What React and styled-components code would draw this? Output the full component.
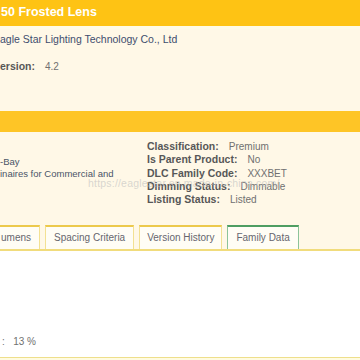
import React from "react";
import styled, { createGlobalStyle } from "styled-components";

const Global = createGlobalStyle`
  html, body {
    margin: 0;
    padding: 0;
    background: #ffffff;
    font-family: "Liberation Sans", Arial, sans-serif;
  }
`;

const Page = styled.div`
  width: 360px;
  height: 360px;
  overflow: hidden;
  position: relative;
  display: flex;
  flex-direction: column;
`;

const Header = styled.div`
  height: 26px;
  flex: none;
  background: #fec314;
  color: #ffffff;
  font-weight: bold;
  font-size: 12.5px;
  line-height: 25px;
  padding-left: 1px;
  white-space: nowrap;
  border-bottom: 3px solid #fffbe6;
`;

const Cream = styled.div`
  flex: none;
  background: #fff8e7;
  position: relative;
`;

const Company = styled.div`
  padding-top: 1px;
  height: 18px;
  line-height: 18px;
  font-size: 10.5px;
  color: #3e4d6e;
  white-space: nowrap;
`;

const Version = styled.div`
  margin-top: 9px;
  height: 18px;
  line-height: 18px;
  white-space: nowrap;
  display: flex;
  gap: 10px;
  align-items: baseline;
`;

const Label = styled.span`
  font-weight: bold;
  color: #575757;
  font-size: 10.5px;
`;

const Value = styled.span`
  color: #707070;
  font-size: 10px;
`;

const Bar = styled.div`
  margin-top: 36px;
  height: 21px;
  background: #fec526;
`;

const Details = styled.div`
  display: grid;
  grid-template-columns: 147px 1fr;
  padding-top: 8px;
  height: 85px;
`;

const LeftCol = styled.div`
  padding-top: 16px;
  font-size: 9.5px;
  line-height: 12px;
  color: #4a5468;
  white-space: nowrap;
`;

const RightCol = styled.div`
  display: flex;
  flex-direction: column;
`;

const Row = styled.div`
  height: 13.3px;
  line-height: 13.3px;
  white-space: nowrap;
  display: flex;
  gap: 10px;
  align-items: baseline;
`;

const Watermark = styled.div`
  position: absolute;
  left: 88px;
  top: 148px;
  font-size: 10.5px;
  color: rgba(190, 190, 190, 0.6);
  white-space: nowrap;
  letter-spacing: 0.2px;
  pointer-events: none;
`;

const Tabs = styled.div`
  display: flex;
  gap: 5px;
  height: 24px;
  border-bottom: 2px solid #f1dc7c;
  align-items: flex-end;
`;

const Tab = styled.div`
  height: 22px;
  padding: 0 ${(p) => p.$pad || 7}px 0 ${(p) => p.$padL ?? p.$pad ?? 7}px;
  margin-left: ${(p) => p.$ml || 0}px;
  background: #fffdf5;
  border: 1px solid ${(p) => (p.$active ? "#8cc49a" : "#f3e192")};
  border-top: 2px solid ${(p) => (p.$active ? "#4f9e62" : "#ecc94c")};
  border-bottom: none;
  color: #66666e;
  font-size: 10px;
  line-height: 22px;
  white-space: nowrap;
`;

const White = styled.div`
  flex: 1;
  background: #ffffff;
  display: flex;
  flex-direction: column;
  justify-content: flex-end;
`;

const Percent = styled.div`
  font-size: 10px;
  color: #707070;
  height: 14px;
  line-height: 14px;
  padding-left: 2px;
  margin-bottom: 8px;
  white-space: nowrap;
`;

const Footer = styled.div`
  height: 2px;
  background: #fffbe0;
  border-top: 1px solid #eedf8c;
`;

export default function App() {
  return (
    <Page>
      <Global />
      <Header>50 Frosted Lens</Header>
      <Cream>
        <Company>agle Star Lighting Technology Co., Ltd</Company>
        <Version>
          <Label>ersion:</Label>
          <Value>4.2</Value>
        </Version>
        <Bar />
        <Details>
          <LeftCol>
            <div>-Bay</div>
            <div>inaires for Commercial and</div>
          </LeftCol>
          <RightCol>
            <Row>
              <Label>Classification:</Label>
              <Value>Premium</Value>
            </Row>
            <Row>
              <Label>Is Parent Product:</Label>
              <Value>No</Value>
            </Row>
            <Row>
              <Label>DLC Family Code:</Label>
              <Value>XXXBET</Value>
            </Row>
            <Row>
              <Label>Dimming Status:</Label>
              <Value>Dimmable</Value>
            </Row>
            <Row>
              <Label>Listing Status:</Label>
              <Value>Listed</Value>
            </Row>
          </RightCol>
        </Details>
        <Tabs>
          <Tab $ml={-1} $padL={1} $pad={8}>umens</Tab>
          <Tab $pad={8}>Spacing Criteria</Tab>
          <Tab>Version History</Tab>
          <Tab $active $pad={8}>Family Data</Tab>
        </Tabs>
        <Watermark>https://eaglestar.en.made-in-china.com/</Watermark>
      </Cream>
      <White>
        <Percent>:{"\u00a0\u00a0\u00a0"}13 %</Percent>
        <Footer />
      </White>
    </Page>
  );
}
